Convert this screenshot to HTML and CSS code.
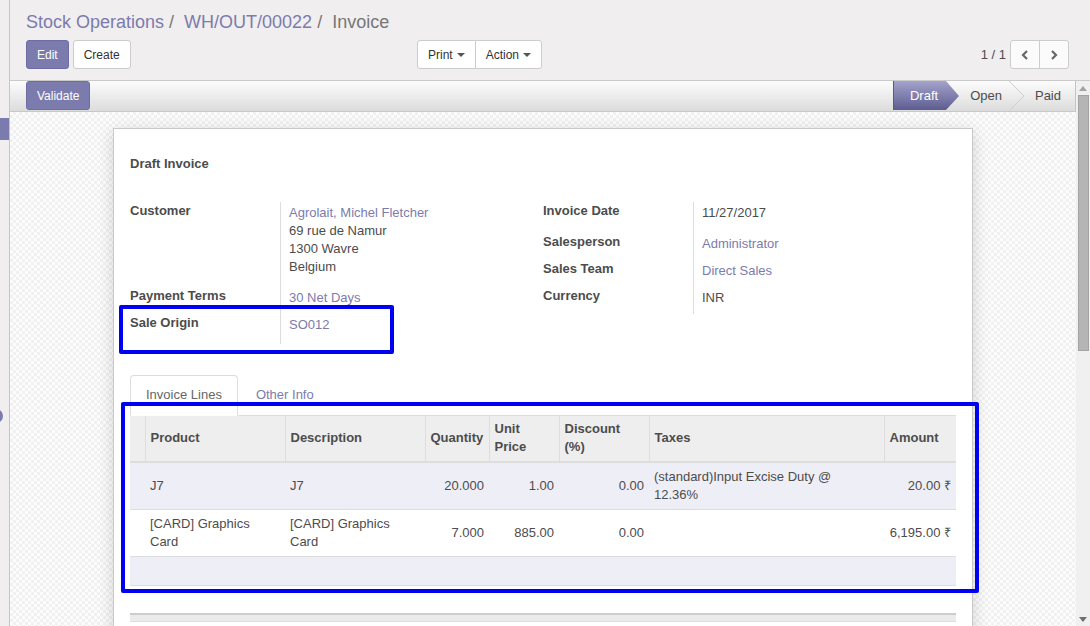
FILE: index.html
```html
<!DOCTYPE html>
<html>
<head>
<meta charset="utf-8">
<title>Invoice</title>
<link rel="stylesheet" href="styles.css">
</head>
<body>
<div class="strip">
  <div class="strip-block"></div>
  <div class="strip-dot"></div>
</div>
<div class="main">
  <div class="cp">
    <div class="breadcrumb">
      <span class="bc-link">Stock Operations</span><span class="bc-sep">/&nbsp;</span><span class="bc-link">WH/OUT/00022</span><span class="bc-sep">/&nbsp;</span><span class="bc-active">Invoice</span>
    </div>
    <div class="cp-row">
      <div class="cp-left">
        <span class="btn btn-primary">Edit</span>
        <span class="btn">Create</span>
      </div>
      <div class="btn-group">
        <span class="btn">Print<span class="caret"></span></span>
        <span class="btn">Action<span class="caret"></span></span>
      </div>
      <div class="pager">
        <span class="pager-value">1 / 1</span>
        <div class="btn-group">
          <span class="btn pager-btn"><svg width="8" height="10" viewBox="0 0 8 10"><polyline points="6,1 2,5 6,9" fill="none" stroke="#666" stroke-width="2.2"/></svg></span>
          <span class="btn pager-btn"><svg width="8" height="10" viewBox="0 0 8 10"><polyline points="2,1 6,5 2,9" fill="none" stroke="#666" stroke-width="2.2"/></svg></span>
        </div>
      </div>
    </div>
  </div>
  <div class="content">
    <div class="scroll-area">
      <div class="statusbar">
        <span class="btn btn-primary">Validate</span>
        <div class="status">
          <span class="st st-active">Draft</span>
          <svg class="st-arrow" width="13" height="30" viewBox="0 0 13 30">
            <defs><linearGradient id="pg" x1="0" y1="0" x2="0" y2="1"><stop offset="0" stop-color="#a4a3cc"/><stop offset="1" stop-color="#5d5c90"/></linearGradient></defs>
            <polygon points="0,0 13,15 0,29" fill="url(#pg)"/>
          </svg>
          <span class="st st-open">Open</span>
          <svg class="st-chev" width="15" height="30" viewBox="0 0 15 30"><polyline points="0,0 15,15 0,30" fill="none" stroke="#cfcfcf" stroke-width="1"/></svg>
          <span class="st st-paid">Paid</span>
        </div>
      </div>
      <div class="sheet-bg">
        <div class="sheet">
          <div class="title">Draft Invoice</div>
          <div class="groups">
            <div class="group">
              <div class="lbl">Customer</div>
              <div class="val val-addr"><span class="link">Agrolait, Michel Fletcher</span><br>69 rue de Namur<br>1300 Wavre<br>Belgium</div>
              <div class="lbl">Payment Terms</div>
              <div class="val"><span class="link">30 Net Days</span></div>
              <div class="lbl">Sale Origin</div>
              <div class="val val-last"><span class="link">SO012</span></div>
            </div>
            <div class="group">
              <div class="lbl">Invoice Date</div>
              <div class="val val-date">11/27/2017</div>
              <div class="lbl">Salesperson</div>
              <div class="val"><span class="link">Administrator</span></div>
              <div class="lbl">Sales Team</div>
              <div class="val"><span class="link">Direct Sales</span></div>
              <div class="lbl">Currency</div>
              <div class="val">INR</div>
            </div>
          </div>
          <div class="tabs">
            <span class="tab tab-active">Invoice Lines</span>
            <span class="tab">Other Info</span>
          </div>
          <table class="lines">
            <colgroup>
              <col style="width:15px"><col style="width:140px"><col style="width:140px"><col style="width:64px"><col style="width:70px"><col style="width:90px"><col style="width:235px"><col style="width:72px">
            </colgroup>
            <thead>
              <tr>
                <th></th><th>Product</th><th>Description</th><th>Quantity</th><th>Unit<br>Price</th><th>Discount<br>(%)</th><th>Taxes</th><th>Amount</th>
              </tr>
            </thead>
            <tbody>
              <tr class="odd">
                <td></td><td>J7</td><td>J7</td><td class="num">20.000</td><td class="num">1.00</td><td class="num">0.00</td><td>(standard)Input Excise Duty @<br>12.36%</td><td class="num">20.00 ₹</td>
              </tr>
              <tr>
                <td></td><td>[CARD] Graphics<br>Card</td><td>[CARD] Graphics<br>Card</td><td class="num">7.000</td><td class="num">885.00</td><td class="num">0.00</td><td></td><td class="num">6,195.00 ₹</td>
              </tr>
              <tr class="odd">
                <td>&nbsp;</td><td></td><td></td><td></td><td></td><td></td><td></td><td></td>
              </tr>
            </tbody>
          </table>
          <div class="footer-bar"></div>
          <div class="mark mark-origin"></div>
          <div class="mark mark-lines"></div>
        </div>
      </div>
    </div>
    <div class="vscroll">
      <div class="sb-arrow"><svg width="8" height="5" viewBox="0 0 8 5"><polygon points="0,5 4,0 8,5" fill="#a3a3a3"/></svg></div>
      <div class="sb-thumb"></div>
      <div class="sb-space"></div>
      <div class="sb-arrow"><svg width="8" height="5" viewBox="0 0 8 5"><polygon points="0,0 8,0 4,5" fill="#6f6f6f"/></svg></div>
    </div>
  </div>
</div>
</body>
</html>
```

FILE: styles.css
```css
* { box-sizing: border-box; }
html, body { margin: 0; padding: 0; }
body {
  width: 1090px;
  height: 626px;
  overflow: hidden;
  display: flex;
  font-family: "Liberation Sans", Arial, sans-serif;
  font-size: 13px;
  color: #4c4c4c;
  background: #f0eeee;
}

.strip {
  width: 10px;
  flex: none;
  border-right: 1px solid #c6c6c6;
  background: #f0eeee;
  display: flex;
  flex-direction: column;
}
.strip-block { margin-top: 118px; width: 9px; height: 22px; background: #7c7bad; }
.strip-dot { margin-top: 269px; margin-left: -11px; width: 14px; height: 14px; border-radius: 50%; background: #7c7bad; }

.main { flex: 1; display: flex; flex-direction: column; min-width: 0; }

.cp {
  padding: 10px 21px 11px 16px;
  border-bottom: 1px solid #cacaca;
  background: #f0eeee;
}
.breadcrumb { font-size: 18px; line-height: 24px; display: flex; white-space: pre; }
.bc-link { color: #7c7bad; }
.bc-sep { color: #777; padding: 0 5px; }
.bc-active { color: #777; }

.cp-row {
  display: grid;
  grid-template-columns: 391px 1fr auto;
  margin-top: 6px;
  align-items: center;
}
.cp-left { display: flex; gap: 4px; }

.btn {
  display: inline-flex;
  align-items: center;
  height: 29px;
  padding: 0 10px;
  font-size: 12px;
  border: 1px solid #ccc;
  border-radius: 3px;
  background: #fff;
  color: #333;
  white-space: nowrap;
}
.btn-primary { background: #7c7bad; border-color: #6e6da2; color: #fff; }
.btn-group { display: flex; }
.btn-group .btn { border-radius: 0; }
.btn-group .btn:first-child { border-radius: 3px 0 0 3px; }
.btn-group .btn:last-child { border-radius: 0 3px 3px 0; margin-left: -1px; }
.caret {
  display: inline-block;
  width: 0;
  height: 0;
  margin-left: 4px;
  border-top: 4px solid #555;
  border-left: 4px solid transparent;
  border-right: 4px solid transparent;
}

.pager { display: flex; align-items: center; gap: 4px; }
.pager-value { font-size: 13px; color: #4c4c4c; }
.pager-btn { width: 30px; justify-content: center; padding: 0; background: #fbfbfb; }

.content { flex: 1; display: flex; min-height: 0; }
.scroll-area { flex: 1; display: flex; flex-direction: column; min-width: 0; overflow: hidden; }

.statusbar {
  flex: none;
  height: 31px;
  display: flex;
  justify-content: space-between;
  align-items: flex-start;
  padding-left: 16px;
  background: linear-gradient(#fcfcfc, #dcdcdc);
  border-bottom: 1px solid #c8c8c8;
  border-right: 1px solid #c4c4c4;
}
.statusbar .btn { font-size: 12px; }
.status { display: flex; align-items: flex-start; height: 30px; }
.st { font-size: 13px; line-height: 30px; height: 30px; color: #4c4c4c; }
.st-active {
  padding: 0 8px 0 16px;
  height: 29px;
  line-height: 29px;
  color: #fff;
  background: linear-gradient(#a4a3cc, #5d5c90);
  border-left: 1px solid #59588c;
}
.st-arrow, .st-chev { display: block; flex: none; }
.st-open { padding: 0 7px 0 11px; }
.st-paid { padding: 0 14px 0 11px; }

.sheet-bg {
  flex: 1;
  padding-top: 16px;
  background-color: #fafafa;
  background-image: repeating-conic-gradient(#f1f1f1 0% 25%, #fcfcfc 0% 50%);
  background-size: 6px 6px;
}
.sheet {
  position: relative;
  width: 860px;
  min-height: 620px;
  margin: 0 auto;
  padding: 25px 16px 0;
  background: #fff;
  border: 1px solid #c9c9c9;
  box-shadow: 0 4px 16px rgba(0, 0, 0, 0.16);
}
.title { font-weight: bold; line-height: 20px; }

.groups { display: grid; grid-template-columns: 1fr 1fr; margin-top: 28px; }
.group { display: grid; grid-template-columns: 150px 1fr; align-content: start; }
.lbl { font-weight: bold; line-height: 16px; padding-top: 1px; }
.val { border-left: 1px solid #ddd; padding: 2px 8px 7px 8px; line-height: 18px; }
.val-addr { padding-bottom: 11px; }
.val-last { padding-bottom: 10px; }
.val-date { padding-bottom: 11px; }
.link { color: #7c7bad; }

.tabs {
  display: flex;
  margin-top: 31px;
  border-bottom: 1px solid #ddd;
}
.tab {
  margin-right: 2px;
  margin-bottom: -1px;
  padding: 10px 15px 11px;
  line-height: 18px;
  border: 1px solid transparent;
  border-radius: 4px 4px 0 0;
  color: #7c7bad;
}
.tab-active {
  color: #666;
  background: #fff;
  border-color: #ddd;
  border-bottom-color: #fff;
}

.lines {
  width: 100%;
  table-layout: fixed;
  border-collapse: collapse;
}
.lines th {
  text-align: left;
  font-weight: bold;
  line-height: 18px;
  padding: 4px 5px 5px;
  background: #eee;
  border-left: 1px solid #ddd;
  border-bottom: 2px solid #ddd;
  vertical-align: middle;
}
.lines th:first-child { border-left: none; }
.lines td {
  line-height: 18px;
  padding: 5px;
  border-bottom: 1px solid #ddd;
  vertical-align: middle;
}
.lines tr.odd td { background: #eeeef6; }
.lines td.num { text-align: right; }

.footer-bar {
  margin-top: 27px;
  height: 9px;
  background: #ebebeb;
  border-top: 2px solid #cdcdcd;
  border-bottom: 1px solid #ddd;
}

.mark {
  position: absolute;
  border: 4px solid #0000f2;
  border-radius: 2px;
}
.mark-origin { left: 5px; top: 176px; width: 275px; height: 49px; }
.mark-lines { left: 7px; top: 273px; width: 858px; height: 191px; }

.vscroll {
  width: 14px;
  flex: none;
  background: #f0f0f0;
  display: flex;
  flex-direction: column;
}
.sb-arrow { height: 14px; display: flex; align-items: center; justify-content: center; flex: none; }
.sb-thumb {
  flex: none;
  height: 256px;
  margin: 0 1px 0 2px;
  background: #b5b5b5;
  border: 1px solid #a4a4a4;
}
.sb-space { flex: 1; }
```
